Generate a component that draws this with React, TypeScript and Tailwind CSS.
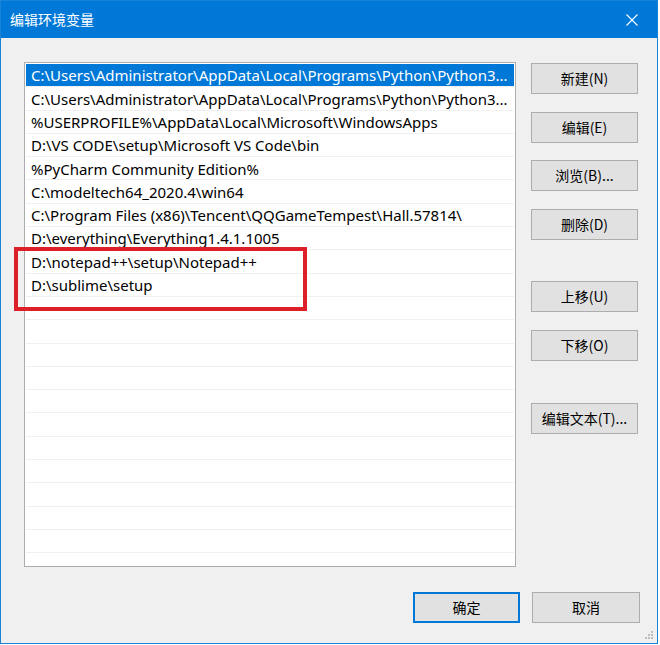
import React from 'react';

const paths = [
  'C:\\Users\\Administrator\\AppData\\Local\\Programs\\Python\\Python3...',
  'C:\\Users\\Administrator\\AppData\\Local\\Programs\\Python\\Python3...',
  '%USERPROFILE%\\AppData\\Local\\Microsoft\\WindowsApps',
  'D:\\VS CODE\\setup\\Microsoft VS Code\\bin',
  '%PyCharm Community Edition%',
  'C:\\modeltech64_2020.4\\win64',
  'C:\\Program Files (x86)\\Tencent\\QQGameTempest\\Hall.57814\\',
  'D:\\everything\\Everything1.4.1.1005',
  'D:\\notepad++\\setup\\Notepad++',
  'D:\\sublime\\setup',
];

const font = { fontFamily: '"Noto Sans", "Noto Sans CJK SC", sans-serif' };
const cjk = { fontFamily: '"Noto Sans CJK SC", "Noto Sans", sans-serif' };

function Btn({ label, className = '', primary = false }: { label: string; className?: string; primary?: boolean }) {
  return (
    <button
      type="button"
      style={cjk}
      className={`flex h-[31px] w-[107px] items-center justify-center bg-[#e1e1e1] text-[14px] text-black ${
        primary ? 'border-2 border-[#0078d7]' : 'border border-[#adadad]'
      } ${className}`}
    >
      {label}
    </button>
  );
}

export default function App() {
  const rows = [...paths, ...Array(11).fill('')];

  return (
    <div className="h-[645px] w-[660px] bg-white">
      <div className="relative flex h-[644px] w-[658px] flex-col border border-[#1883d7] bg-[#f0f0f0]">
        {/* title bar */}
        <div className="flex h-[37px] items-center justify-between bg-[#0078d7] pl-[9px] pr-[19px] text-white">
          <span style={cjk} className="text-[14px]">编辑环境变量</span>
          <svg width="12" height="12" viewBox="0 0 12 12">
            <path d="M0.5 0.5 L11.5 11.5 M11.5 0.5 L0.5 11.5" stroke="white" strokeWidth="1.1" fill="none" />
          </svg>
        </div>

        <div className="flex pl-[23px] pt-[24px]">
          {/* list */}
          <div className="h-[505px] w-[492px] overflow-hidden border border-[#adadad] bg-white p-px">
            {rows.map((p, i) => (
              <div
                key={i}
                style={font}
                className={`flex h-[23.3px] items-center whitespace-nowrap border-b border-[#f0f0f0] pl-[5px] pt-px text-[15px] ${
                  i === 0 ? 'bg-[#0078d7] text-white' : 'text-black'
                }`}
              >
                {p}
              </div>
            ))}
          </div>

          {/* side buttons */}
          <div className="ml-[15px] mt-px flex flex-col">
            <Btn label="新建(N)" />
            <Btn label="编辑(E)" className="mt-[18px]" />
            <Btn label="浏览(B)..." className="mt-[17px]" />
            <Btn label="删除(D)" className="mt-[18px]" />
            <Btn label="上移(U)" className="mt-[41px]" />
            <Btn label="下移(O)" className="mt-[18px]" />
            <Btn label="编辑文本(T)..." className="mt-[42px]" />
          </div>
        </div>

        {/* bottom buttons */}
        <div className="mt-[25px] flex justify-end gap-[12px] pr-[17px]">
          <Btn label="确定" primary className="w-[106px]" />
          <Btn label="取消" className="w-[108px]" />
        </div>

        {/* highlight box */}
        <div className="absolute left-[13px] top-[246px] h-[64px] w-[293px] border-4 border-[#dd2027]" />

        {/* size grip */}
        <svg className="absolute bottom-[3px] right-[3px]" width="10" height="10" viewBox="0 0 10 10">
          {[
            [8, 2], [8, 5], [5, 5], [8, 8], [5, 8], [2, 8],
          ].map(([x, y], i) => (
            <rect key={i} x={x - 1} y={y - 1} width="2" height="2" fill="#bdbdbd" />
          ))}
        </svg>
      </div>
    </div>
  );
}
